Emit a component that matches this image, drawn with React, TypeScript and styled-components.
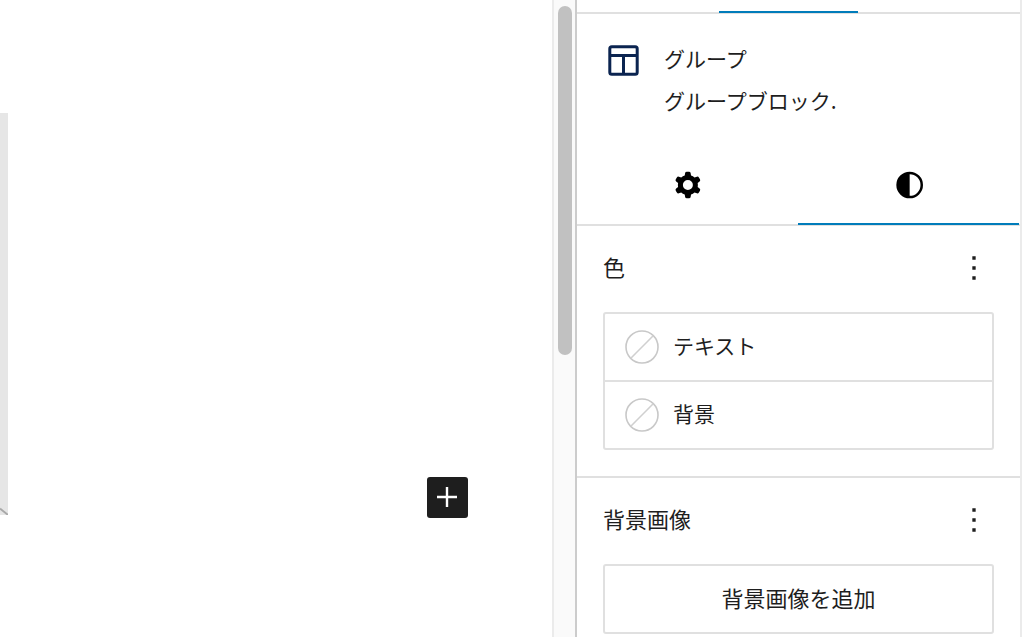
import React, { useState } from "react";
import styled, { createGlobalStyle } from "styled-components";

const line = "#e0e0e0";
const accent = "#007cba";
const ink = "#1e1e1e";

const GlobalStyle = createGlobalStyle`
  *, *::before, *::after { box-sizing: border-box; }
  body {
    margin: 0;
    background: #fff;
    color: ${ink};
    font-family: "Noto Sans CJK JP", "Liberation Sans", sans-serif;
    font-size: 22px;
    line-height: 32px;
  }
  h2, h3, p, ul { margin: 0; padding: 0; font-size: inherit; font-weight: 400; }
  button { margin: 0; padding: 0; border: 0; background: none; color: inherit; font: inherit; cursor: pointer; }
  svg { display: block; }
`;

const Editor = styled.div`
  display: flex;
  height: 100vh;
  overflow: hidden;
`;

const Canvas = styled.main`
  flex: 1;
  min-width: 0;
  display: flex;
  align-items: flex-start;
  justify-content: space-between;
  padding: 113px 84px 0 0;
`;

const TextBlock = styled.div`
  display: flex;
  align-items: flex-end;
  width: 8px;
  height: 402px;
  background: #e6e6e6;
`;

const Inserter = styled.button`
  width: 41px;
  height: 41px;
  margin-top: 364px;
  border-radius: 3px;
  background: ${ink};
  color: #fff;
`;

const ScrollTrack = styled.div`
  width: 23px;
  padding: 6px 4px;
  border-left: 2px solid #ebebeb;
  background: #fafafa;
`;

const ScrollThumb = styled.div`
  width: 14px;
  height: 349px;
  border-radius: 7px;
  background: #c1c1c1;
`;

const Sidebar = styled.aside`
  width: 449px;
  display: flex;
  flex-direction: column;
  border-left: 2px solid #ccc;
`;

const SidebarBody = styled.div`
  flex: 1;
  border-right: 2px solid #ebebeb;
  margin-right: 2px;
`;

const AreaTabs = styled.div`
  display: flex;
  height: 14px;
  padding-left: 142px;
  border-bottom: 2px solid ${line};
`;

const AreaTab = styled.button`
  width: 139px;
  height: 13px;
  border-bottom: 2px solid ${accent};
`;

const BlockCard = styled.section`
  display: flex;
  gap: 25px;
  padding: 23px 31px 24px;
`;

const BlockIcon = styled.svg`
  width: 31px;
  height: 31px;
  margin-top: 8px;
`;

const BlockText = styled.div`
  font-size: 21px;
  line-height: 42px;
`;

const InspectorTabs = styled.div`
  display: flex;
  height: 81px;
  padding-right: 1px;
  border-bottom: 2px solid ${line};
`;

const InspectorTab = styled.button<{ $active: boolean }>`
  flex: 1;
  height: 80px;
  display: flex;
  align-items: center;
  justify-content: center;
  color: #000;
  box-shadow: ${(p) => (p.$active ? `inset 0 -2px ${accent}` : "none")};
`;

const Panel = styled.section`
  padding: 22px 26px 26px;
  border-bottom: 2px solid ${line};
`;

const PanelHeader = styled.header`
  display: flex;
  align-items: center;
  justify-content: space-between;
  height: 40px;
  margin-bottom: 24px;
`;

const PanelHeading = styled.h3`
  padding-bottom: 4px;
`;

const MenuButton = styled.button`
  width: 40px;
  height: 40px;
`;

const ColorList = styled.ul`
  list-style: none;
  border: 2px solid ${line};
  border-radius: 3px;
`;

const ColorItem = styled.li`
  & + & { border-top: 2px solid ${line}; }
`;

const ColorButton = styled.button`
  display: flex;
  align-items: center;
  gap: 14px;
  width: 100%;
  height: 66px;
  padding: 0 20px;
  font-size: 21px;
`;

const ColorName = styled.span`
  padding-bottom: 4px;
`;

const AddButton = styled.button`
  width: 100%;
  height: 70px;
  padding-bottom: 5px;
  border: 2px solid ${line};
  border-radius: 3px;
`;

const Icon = ({ d, size = 40 }: { d: string; size?: number }) => (
  <svg width={size} height={size} viewBox="0 0 24 24" fill="currentColor" fillRule="evenodd" aria-hidden="true">
    <path d={d} />
  </svg>
);

const cog =
  "M10.289 4.836A1 1 0 0111.275 4h1.306a1 1 0 01.987.836l.244 1.466c.787.26 1.503.679 2.108 1.218l1.393-.522a1 1 0 011.216.437l.653 1.13a1 1 0 01-.23 1.273l-1.148.944a6.025 6.025 0 010 2.435l1.149.946a1 1 0 01.23 1.272l-.653 1.13a1 1 0 01-1.216.437l-1.394-.522c-.605.54-1.32.958-2.108 1.218l-.244 1.466a1 1 0 01-.987.836h-1.306a1 1 0 01-.986-.836l-.244-1.466a5.995 5.995 0 01-2.108-1.218l-1.394.522a1 1 0 01-1.217-.436l-.653-1.131a1 1 0 01.23-1.272l1.149-.946a6.026 6.026 0 010-2.435l-1.148-.944a1 1 0 01-.23-1.272l.653-1.131a1 1 0 011.217-.437l1.393.522a5.994 5.994 0 012.108-1.218l.244-1.466zM14.929 12a3 3 0 11-6 0 3 3 0 016 0z";
const styles = "M20.4 12a8 8 0 1 1-16 0 8 8 0 0 1 16 0Zm-1.5 0a6.5 6.5 0 0 1-6.5 6.5v-13a6.5 6.5 0 0 1 6.5 6.5Z";
const more = "M13 19h-2v-2h2v2zm0-6h-2v-2h2v2zm0-6h-2V5h2v2z";

const EmptySwatch = () => (
  <svg width="34" height="34" viewBox="0 0 34 34" fill="none" aria-hidden="true">
    <circle cx="17" cy="17" r="16" stroke="#c8c8c8" strokeWidth="1.6" />
    <path d="M5.8 28.2 28.2 5.8" stroke="#d0d0d0" strokeWidth="1.6" />
  </svg>
);

const PanelTitle = ({ title }: { title: string }) => (
  <PanelHeader>
    <PanelHeading>{title}</PanelHeading>
    <MenuButton type="button" aria-label={`${title}オプション`}>
      <Icon d={more} />
    </MenuButton>
  </PanelHeader>
);

const tabs = [
  { id: "settings", label: "設定", icon: cog },
  { id: "styles", label: "スタイル", icon: styles },
];

export default function App() {
  const [tab, setTab] = useState("styles");

  return (
    <>
      <GlobalStyle />
      <Editor>
        <Canvas>
          <TextBlock>
            <svg width="8" height="8" viewBox="0 0 8 8" aria-hidden="true">
              <path d="M0 1.5 8 8" stroke="#a8a8a8" strokeWidth="1.8" />
            </svg>
          </TextBlock>
          <Inserter type="button" aria-label="ブロックを追加">
            <svg width="41" height="41" viewBox="0 0 41 41" aria-hidden="true">
              <path d="M20 10v20M10 20h20" stroke="currentColor" strokeWidth="2.4" />
            </svg>
          </Inserter>
        </Canvas>
        <ScrollTrack>
          <ScrollThumb />
        </ScrollTrack>
        <Sidebar>
          <SidebarBody>
            <AreaTabs>
              <AreaTab type="button" aria-label="ブロック" />
            </AreaTabs>
            <BlockCard>
              <BlockIcon viewBox="0 0 31 31" fill="none" stroke="#0b2450" strokeWidth="3" aria-hidden="true">
                <rect x="1.8" y="1.8" width="27.4" height="27.4" rx="2" />
                <path d="M2 10.6h27M15.5 10.6v18.4" />
              </BlockIcon>
              <BlockText>
                <h2>グループ</h2>
                <p>グループブロック.</p>
              </BlockText>
            </BlockCard>
            <InspectorTabs role="tablist">
              {tabs.map((t) => (
                <InspectorTab
                  key={t.id}
                  type="button"
                  role="tab"
                  aria-label={t.label}
                  aria-selected={tab === t.id}
                  $active={tab === t.id}
                  onClick={() => setTab(t.id)}
                >
                  <Icon d={t.icon} />
                </InspectorTab>
              ))}
            </InspectorTabs>
            <Panel>
              <PanelTitle title="色" />
              <ColorList>
                {["テキスト", "背景"].map((name) => (
                  <ColorItem key={name}>
                    <ColorButton type="button">
                      <EmptySwatch />
                      <ColorName>{name}</ColorName>
                    </ColorButton>
                  </ColorItem>
                ))}
              </ColorList>
            </Panel>
            <Panel>
              <PanelTitle title="背景画像" />
              <AddButton type="button">背景画像を追加</AddButton>
            </Panel>
          </SidebarBody>
        </Sidebar>
      </Editor>
    </>
  );
}
